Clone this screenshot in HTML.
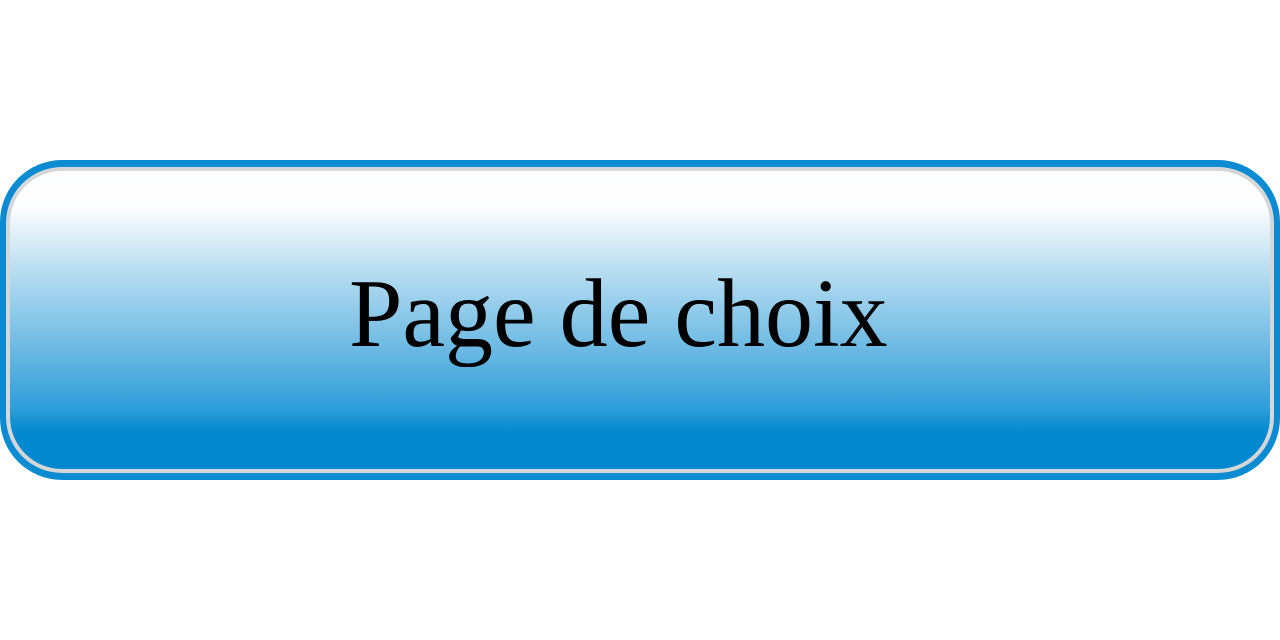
<!DOCTYPE html>
<html><head><style>
html,body{margin:0;padding:0;background:#fff;width:1280px;height:640px;overflow:hidden}
.outer{position:absolute;left:0;top:160px;width:1280px;height:320px;box-sizing:border-box;border-radius:62px;background:#0a8bd2}
.gray{position:absolute;left:6px;top:7px;right:6px;bottom:7px;border-radius:56px;background:#d4d6d8}
.inner{position:absolute;left:4px;top:4px;right:4px;bottom:4px;border-radius:52px;
background:linear-gradient(to bottom,#fff 0%,#fdfeff 12%,#d2eaf6 25%,#a4d4ee 40%,#6bb9e3 60%,#2c9dd9 80%,#0089d1 88%,#0089d1 100%)}
.t{position:absolute;left:349px;top:265px;font-family:"Liberation Serif",serif;font-size:97px;color:#000;white-space:nowrap;line-height:1;transform:scaleX(0.99);transform-origin:left top}
</style></head><body>
<div class="outer"><div class="gray"><div class="inner"></div></div></div>
<div class="t">Page de choix</div>
</body></html>
